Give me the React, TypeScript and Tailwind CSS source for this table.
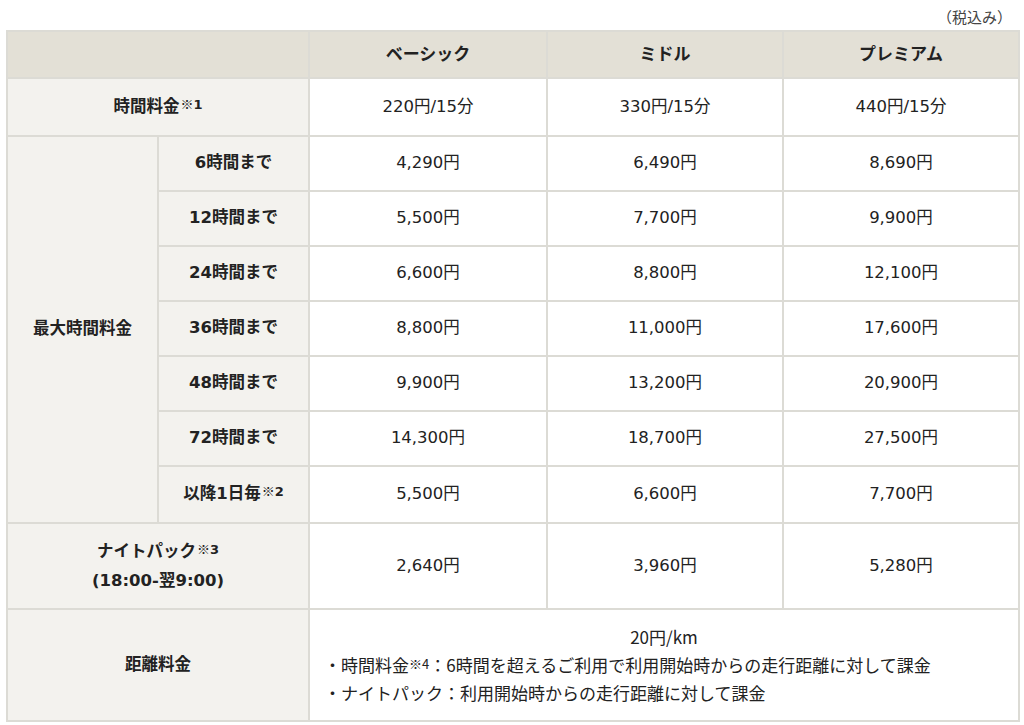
import React from "react";

const font = { fontFamily: '"DejaVu Sans", "Noto Sans CJK JP", sans-serif' };

const Sup = ({ n }: { n: string }) => (
  <sup className="text-[13px] relative -top-[3px] ml-[1px] font-bold">
    <span className="font-normal" style={{ fontFamily: '"Noto Sans CJK JP", sans-serif' }}>※</span>
    {n}
  </sup>
);

const rows: [string, string, string, string][] = [
  ["6時間まで", "4,290円", "6,490円", "8,690円"],
  ["12時間まで", "5,500円", "7,700円", "9,900円"],
  ["24時間まで", "6,600円", "8,800円", "12,100円"],
  ["36時間まで", "8,800円", "11,000円", "17,600円"],
  ["48時間まで", "9,900円", "13,200円", "20,900円"],
  ["72時間まで", "14,300円", "18,700円", "27,500円"],
];

const lb = "bg-[#f3f2ee] border-2 border-[#dcdbd5] font-bold text-center align-middle";
const dc = "border-2 border-[#dcdbd5] text-center align-middle";

export default function App() {
  return (
    <div className="w-[1024px] h-[725px] bg-white text-[#222] overflow-hidden" style={font}>
      <div className="pt-[6px] pr-[12px] text-right text-[15px] text-[#444] h-[30px] leading-[22px]" style={{ fontFamily: '"Noto Sans CJK JP", sans-serif' }}>
        （税込み）
      </div>
      <table className="ml-[6px] border-collapse table-fixed w-[1012px] text-[16.5px]">
        <colgroup>
          <col className="w-[151px]" />
          <col className="w-[151px]" />
          <col className="w-[238px]" />
          <col className="w-[236px]" />
          <col className="w-[236px]" />
        </colgroup>
        <tbody>
          <tr className="h-[47px] bg-[#e3e0d6]">
            <td colSpan={2} className="border-2 border-[#dcdbd5]"></td>
            <td className="border-2 border-[#dcdbd5] text-center font-bold text-[17px]">ベーシック</td>
            <td className="border-2 border-[#dcdbd5] text-center font-bold text-[17px]">ミドル</td>
            <td className="border-2 border-[#dcdbd5] text-center font-bold text-[17px]">プレミアム</td>
          </tr>
          <tr className="h-[58px]">
            <td colSpan={2} className={lb}>
              時間料金<Sup n="1" />
            </td>
            <td className={dc}>220円/15分</td>
            <td className={dc}>330円/15分</td>
            <td className={dc}>440円/15分</td>
          </tr>
          {rows.map((r, i) => (
            <tr key={r[0]} className="h-[55px]">
              {i === 0 && (
                <td rowSpan={7} className={lb}>
                  最大時間料金
                </td>
              )}
              <td className={lb}>{r[0]}</td>
              <td className={dc}>{r[1]}</td>
              <td className={dc}>{r[2]}</td>
              <td className={dc}>{r[3]}</td>
            </tr>
          ))}
          <tr className="h-[57px]">
            <td className={lb}>
              以降1日毎<Sup n="2" />
            </td>
            <td className={dc}>5,500円</td>
            <td className={dc}>6,600円</td>
            <td className={dc}>7,700円</td>
          </tr>
          <tr className="h-[86px]">
            <td colSpan={2} className={lb + " leading-[29px]"}>
              ナイトパック<Sup n="3" />
              <br />
              (18:00-翌9:00)
            </td>
            <td className={dc}>2,640円</td>
            <td className={dc}>3,960円</td>
            <td className={dc}>5,280円</td>
          </tr>
          <tr className="h-[112px]">
            <td colSpan={2} className={lb}>
              距離料金
            </td>
            <td colSpan={3} className="border-2 border-[#dcdbd5] align-middle px-[14px] text-[17px] leading-[28px]" style={{ fontFamily: '"Noto Sans CJK JP", sans-serif' }}>
              <div className="text-center">20円/km</div>
              <div>
                ・時間料金<sup className="text-[13px] relative -top-[3px]">※4</sup>：6時間を超えるご利用で利用開始時からの走行距離に対して課金
              </div>
              <div>・ナイトパック：利用開始時からの走行距離に対して課金</div>
            </td>
          </tr>
        </tbody>
      </table>
    </div>
  );
}
